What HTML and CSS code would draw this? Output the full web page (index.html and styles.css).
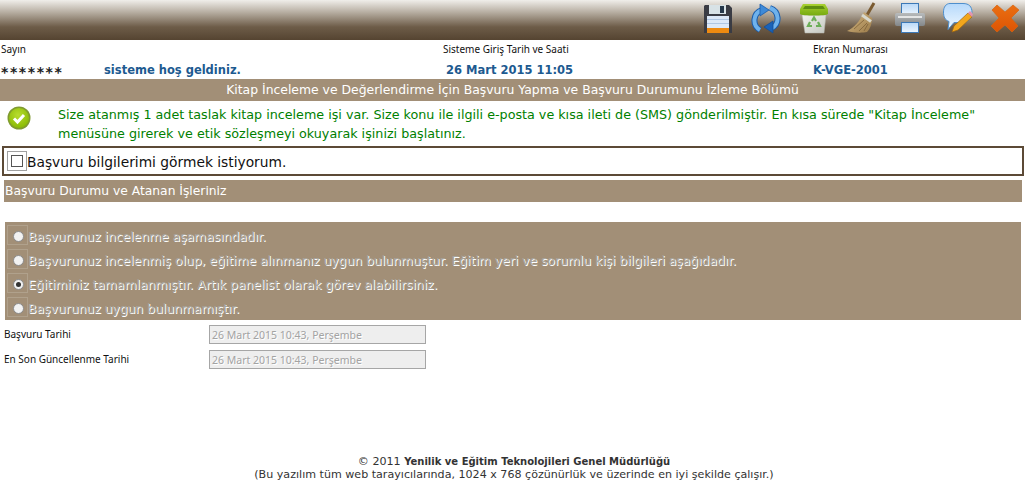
FILE: index.html
```html
<!DOCTYPE html>
<html lang="tr">
<head>
<meta charset="utf-8">
<title>Kitap İnceleme</title>
<link rel="stylesheet" href="styles.css">
</head>
<body>
<svg class="defs" width="0" height="0" aria-hidden="true"><defs>
  <linearGradient id="gLid" x1="0" y1="0" x2="0" y2="1"><stop offset="0" stop-color="#a8d030"/><stop offset="1" stop-color="#76aa10"/></linearGradient>
  <linearGradient id="gBin" x1="0" y1="0" x2="1" y2="1"><stop offset="0" stop-color="#f2f3ee"/><stop offset="1" stop-color="#c4c6bf"/></linearGradient>
  <linearGradient id="gPaper" x1="0" y1="0" x2="0" y2="1"><stop offset="0" stop-color="#b8d8f8"/><stop offset="1" stop-color="#eef6fe"/></linearGradient>
  <linearGradient id="gPrinter" x1="0" y1="0" x2="0" y2="1"><stop offset="0" stop-color="#b8bbbc"/><stop offset="1" stop-color="#83878a"/></linearGradient>
  <linearGradient id="gBubble" x1="0" y1="0" x2="0" y2="1"><stop offset="0" stop-color="#b6d9fb"/><stop offset="1" stop-color="#eef7ff"/></linearGradient>
  <linearGradient id="gX" x1="0" y1="0" x2="0" y2="1"><stop offset="0" stop-color="#ea6f12"/><stop offset="1" stop-color="#dd5404"/></linearGradient>
  <linearGradient id="gBroom" x1="0" y1="0" x2="1" y2="1"><stop offset="0" stop-color="#d8bb86"/><stop offset="1" stop-color="#9a7a48"/></linearGradient>
  <radialGradient id="gCheck" cx=".45" cy=".35" r=".7"><stop offset="0" stop-color="#b8dc30"/><stop offset="1" stop-color="#86b800"/></radialGradient>
</defs></svg>
<header class="toolbar">
  <svg class="ico" viewBox="0 0 30 32"><path d="M2 3h24l3 3v25H1V4z" fill="#3a3c44"/><rect x="6" y="3" width="17" height="9" fill="#d8e2e6"/><rect x="17" y="4" width="4" height="7" fill="#26384a"/><rect x="4" y="14" width="22" height="12" fill="#dce8f7"/><path d="M4 17.500h22M4 21.500h22" stroke="#afc6e2"/><rect x="4" y="26" width="22" height="5" fill="#ee8a10"/></svg>
  <svg class="ico" viewBox="0 0 30 32"><g fill="none" stroke-linecap="butt"><path d="M11 8A11 11 0 0 0 9 28M19 6A11 11 0 0 1 21 26" stroke="#1a5cab" stroke-width="6"/><path d="M11 8A11 11 0 0 0 9 28M19 6A11 11 0 0 1 21 26" stroke="#6fb2ec" stroke-width="4"/></g><path d="M9 2l9 6-9 6z" fill="#3e8ad8" stroke="#1a5cab" stroke-width=".8"/><path d="M22 19l-9 6 9 6z" fill="#1a62b8" stroke="#134f98" stroke-width=".8"/></svg>
  <svg class="ico" viewBox="0 0 30 32"><path d="M3 13h24l-2 18H6z" fill="url(#gBin)" stroke="#b0b2aa" stroke-width=".5"/><path d="M4 2h22l3 5v5c-2 2-26 2-28 0V7z" fill="url(#gLid)"/><path d="M6 4h18l2 3H4z" fill="#5d8c10"/><g fill="none" stroke="#6cae58" stroke-width="2.200"><path d="M13 19l2-3.500 2 3.500"/><path d="M19 20l2 4h-4"/><path d="M13 24H9l2-4"/></g></svg>
  <svg class="ico" viewBox="0 0 30 32"><path d="M27 1l-7 12" stroke="#7a5a30" stroke-width="3"/><path d="M17 10l8 6c0 6-2 11-5 14-5 1-13 1-20-1 7-3 13-10 17-19z" fill="url(#gBroom)"/><path d="M15 13l9 6.500" stroke="#d8d8cc" stroke-width="3"/><path d="M7 27l10-9M12 29l8-8M17 29l4-7" stroke="#7d6238" stroke-width=".8"/></svg>
  <svg class="ico" viewBox="0 0 30 32"><rect x="6.500" y="1.500" width="17" height="12" fill="url(#gPaper)" stroke="#3c78b6"/><rect x="0" y="11" width="30" height="13" rx="2" fill="url(#gPrinter)"/><rect x="3" y="14" width="24" height="2" fill="#e4e5e5"/><rect x="6.500" y="20.500" width="17" height="10" fill="url(#gPaper)" stroke="#3c78b6"/></svg>
  <svg class="ico" viewBox="0 0 30 32"><path d="M7 1.500h13c6 0 9 3 9 9 0 6-4 10-9 10h-9l-6 7 1-8C2 18 .5 15 .5 10 .5 5 3 1.500 7 1.500z" fill="url(#gBubble)" stroke="#4f8fcc"/><path d="M9 30l2-6 14-13 4 4-14 13z" fill="#f2a61c" stroke="#9c6410" stroke-width=".7"/><path d="M25 11l2-2 3 3-1 3z" fill="#e594ac"/></svg>
  <svg class="ico" viewBox="0 0 30 32"><path d="M6 3l8 7 8-7 6 5-8 8 7 8-6 6-7-7-8 7-6-6 8-8-7-8z" fill="url(#gX)" stroke="#d9640f" stroke-width=".7"/></svg>
</header>

<section class="info">
  <div class="info-col col-user">
    <span class="label">Sayın</span>
    <div class="value"><span class="stars">*******</span><span class="blue">sisteme hoş geldiniz.</span></div>
  </div>
  <div class="info-col col-date">
    <span class="label">Sisteme Giriş Tarih ve Saati</span>
    <div class="value blue date-value">26 Mart 2015 11:05</div>
  </div>
  <div class="info-col col-screen">
    <span class="label">Ekran Numarası</span>
    <div class="value blue">K-VGE-2001</div>
  </div>
</section>

<div class="title-bar">Kitap İnceleme ve Değerlendirme İçin Başvuru Yapma ve Başvuru Durumunu İzleme Bölümü</div>

<div class="message">
  <svg class="check" viewBox="0 0 24 24"><circle cx="12" cy="12" r="11.500" fill="#7f9a30"/><circle cx="12" cy="12" r="10" fill="url(#gCheck)"/><path d="M7 12.500l3.500 3.500L17 9" fill="none" stroke="#fff" stroke-width="3"/></svg>
  <p>Size atanmış 1 adet taslak kitap inceleme işi var. Size konu ile ilgili e-posta ve kısa ileti de (SMS) gönderilmiştir. En kısa sürede "Kitap İnceleme" menüsüne girerek ve etik sözleşmeyi okuyarak işinizi başlatınız.</p>
</div>

<label class="apply-box"><span class="box-wrap"><span class="box"></span></span>Başvuru bilgilerimi görmek istiyorum.</label>

<div class="section-bar">Başvuru Durumu ve Atanan İşleriniz</div>

<div class="status-panel">
  <div class="status"><span class="radio-wrap"><span class="radio"></span></span><span class="status-text">Başvurunuz incelenme aşamasındadır.</span></div>
  <div class="status"><span class="radio-wrap"><span class="radio"></span></span><span class="status-text">Başvurunuz incelenmiş olup, eğitime alınmanız uygun bulunmuştur. Eğitim yeri ve sorumlu kişi bilgileri aşağıdadır.</span></div>
  <div class="status"><span class="radio-wrap"><span class="radio on"></span></span><span class="status-text">Eğitiminiz tamamlanmıştır. Artık panelist olarak görev alabilirsiniz.</span></div>
  <div class="status"><span class="radio-wrap"><span class="radio"></span></span><span class="status-text">Başvurunuz uygun bulunmamıştır.</span></div>
</div>

<div class="field"><span class="field-label">Başvuru Tarihi</span><span class="field-input">26 Mart 2015 10:43, Perşembe</span></div>
<div class="field"><span class="field-label">En Son Güncellenme Tarihi</span><span class="field-input">26 Mart 2015 10:43, Perşembe</span></div>

<footer class="footer">
  <div>© 2011 <b>Yenilik ve Eğitim Teknolojileri Genel Müdürlüğü</b></div>
  <div>(Bu yazılım tüm web tarayıcılarında, 1024 x 768 çözünürlük ve üzerinde en iyi şekilde çalışır.)</div>
</footer>
</body>
</html>
```

FILE: styles.css
```css
* { box-sizing: border-box; }
html, body { margin: 0; padding: 0; }
body {
  width: 1025px;
  height: 488px;
  overflow: hidden;
  background: #fff;
  font-family: "DejaVu Sans", Verdana, sans-serif;
  display: flex;
  flex-direction: column;
}
.defs { position: absolute; }
.toolbar {
  height: 40px;
  flex: none;
  background: linear-gradient(#f0eeea 0, #b8afa3 12px, #6d5c48 27px, #554431 40px);
  display: flex;
  justify-content: flex-end;
  align-items: flex-start;
  gap: 18px;
  padding: 2px 4px 0 0;
}
.ico { width: 30px; height: 32px; flex: none; }
.info {
  height: 39px;
  flex: none;
  display: flex;
}
.info-col { display: flex; flex-direction: column; }
.col-user { width: 443px; padding-left: 1px; }
.col-date { width: 370px; }
.label {
  font-family: "Noto Sans", "Liberation Sans", sans-serif;
  font-size: 10px;
  line-height: 14px;
  height: 14px;
  margin-top: 2px;
  color: #111;
}
.value {
  margin-top: 6px;
  font-weight: bold;
  font-size: 11.500px;
  line-height: 16px;
  white-space: nowrap;
}
.date-value { padding-left: 3px; }
.blue { color: #1d5a90; }
.stars {
  display: inline-block;
  width: 103px;
  color: #222;
  font-size: 14px;
  letter-spacing: 1.600px;
  line-height: 10px;
  vertical-align: -3px;
}
.title-bar {
  height: 22px;
  flex: none;
  background: #a28f77;
  color: #fff;
  font-size: 12.400px;
  line-height: 22px;
  text-align: center;
}
.message {
  height: 45px;
  flex: none;
  display: flex;
  align-items: flex-start;
  color: #008000;
  font-size: 12.720px;
  line-height: 19px;
}
.check { width: 24px; height: 24px; margin: 5px 0 0 7px; flex: none; }
.message p { margin: 4px 0 0 27px; width: 950px; }
.apply-box {
  height: 30px;
  flex: none;
  margin: 0 1px 0 2px;
  border: 2px solid #5c4a36;
  display: flex;
  align-items: center;
  padding-top: 1px;
  font-size: 13.800px;
  color: #111;
}
.box-wrap {
  width: 20px;
  height: 20px;
  margin-left: 3px;
  margin-top: -1px;
  border: 1px solid #a0a0a0;
  display: flex;
  align-items: center;
  justify-content: center;
  flex: none;
}
.box { width: 12px; height: 12px; border: 1px solid #555; background: #fff; }
.section-bar {
  height: 22px;
  flex: none;
  margin: 4px 3px 0 4px;
  background: #a28f77;
  color: #fff;
  font-size: 12.300px;
  line-height: 23px;
  padding-left: 1px;
}
.status-panel {
  height: 98px;
  flex: none;
  margin: 20px 4px 0 5px;
  padding-top: 3px;
  background: #a28f77;
  display: flex;
  flex-direction: column;
  gap: 4px;
  font-size: 12.350px;
}
.status { height: 20px; flex: none; display: flex; align-items: flex-start; white-space: nowrap; }
.status-text {
  margin-top: 3px;
  line-height: 18px;
  color: #a8a49c;
  text-shadow: 1px 1px 0 #fff;
}
.radio-wrap {
  width: 21px;
  height: 20px;
  margin-left: 2px;
  border: 1px solid #b0a18c;
  display: flex;
  align-items: center;
  justify-content: center;
  padding: 2px 0 0 2px;
  flex: none;
}
.radio {
  width: 11px;
  height: 11px;
  border-radius: 50%;
  background: #f2f2f2;
  border: 1px solid #8b8b8b;
  position: relative;
}
.radio.on::after {
  content: "";
  position: absolute;
  left: 2px;
  top: 2px;
  width: 5px;
  height: 5px;
  border-radius: 50%;
  background: #333;
}
.field { height: 19px; flex: none; display: flex; align-items: center; margin-top: 5px; padding-left: 4px; }
.field + .field { margin-top: 6px; }
.field-label {
  width: 205px;
  padding-bottom: 2px;
  font-family: "Noto Sans", "Liberation Sans", sans-serif;
  font-size: 10px;
  color: #111;
}
.field-input {
  width: 217px;
  height: 19px;
  border: 1px solid #a6a6a6;
  background: #eeeeee;
  color: #a3a3a3;
  font-family: "Noto Sans", "Liberation Sans", sans-serif;
  font-size: 10.500px;
  line-height: 18px;
  padding-left: 2px;
  white-space: nowrap;
  text-shadow: 1px 1px 0 #fff;
}
.footer {
  margin-top: 86px;
  text-align: center;
  font-size: 11.100px;
  line-height: 13px;
  color: #333;
  padding-left: 3px;
}
.footer b { font-size: 10px; }
```
